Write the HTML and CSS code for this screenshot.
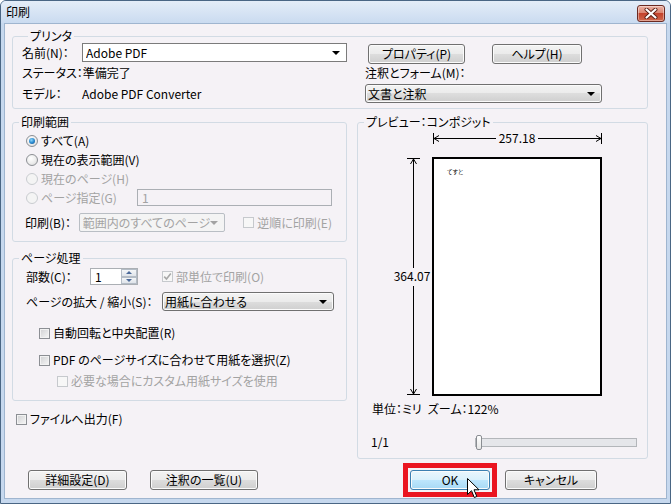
FILE: index.html
```html
<!DOCTYPE html>
<html lang="ja">
<head>
    <meta charset="UTF-8">
    <title>印刷</title>
    <link rel="stylesheet" href="styles.css">
</head>
<body>
<div class="window">
    <div class="titlebar">
        <span class="title">印刷</span>
        <button class="close-btn" title="閉じる">
            <svg width="14" height="11" viewBox="0 0 14 11">
                <path d="M2.5 1.5 L11.5 9.5 M11.5 1.5 L2.5 9.5" stroke="#5a1f14" stroke-width="4" stroke-linecap="round"/>
                <path d="M2.5 1.5 L11.5 9.5 M11.5 1.5 L2.5 9.5" stroke="#fff" stroke-width="2.2" stroke-linecap="round"/>
            </svg>
        </button>
    </div>

    <div class="frame">
        <div class="client">
            <!-- printer -->
            <fieldset class="group printer-group">
                <legend>プリンタ</legend>
                <div class="printer-grid">
                    <span>名前(N)：</span>
                    <div class="combo combo-white"><span>Adobe PDF</span><span class="arrow"></span></div>
                    <div class="printer-buttons right">
                        <button class="btn btn-prop">プロパティ(P)</button>
                        <button class="btn btn-help">ヘルプ(H)</button>
                    </div>

                    <span class="status">ステータス：準備完了</span>
                    <span class="right">注釈とフォーム(M)：</span>

                    <span>モデル：</span>
                    <span>Adobe PDF Converter</span>
                    <div class="right">
                        <div class="combo combo-btn annot-combo"><span>文書と注釈</span><span class="arrow"></span></div>
                    </div>
                </div>
            </fieldset>

            <div class="middle">
                <div class="left-col">
                    <!-- print range -->
                    <fieldset class="group range-group">
                        <legend>印刷範囲</legend>
                        <div class="group-body">
                            <label class="opt radio-row"><span class="radio checked"></span>すべて(A)</label>
                            <label class="opt radio-row"><span class="radio"></span>現在の表示範囲(V)</label>
                            <label class="opt radio-row disabled"><span class="radio"></span>現在のページ(H)</label>
                            <div class="opt radio-row disabled">
                                <span class="radio"></span>ページ指定(G)
                                <span class="field field-pages">1</span>
                            </div>
                            <div class="print-row">
                                <span class="print-label">印刷(B)：</span>
                                <div class="combo combo-disabled subset-combo"><span>範囲内のすべてのページ</span><span class="arrow"></span></div>
                                <label class="opt disabled reverse"><span class="check"></span>逆順に印刷(E)</label>
                            </div>
                        </div>
                    </fieldset>

                    <!-- page handling -->
                    <fieldset class="group pages-group">
                        <legend>ページ処理</legend>
                        <div class="group-body">
                            <div class="copies-row">
                                <span class="copies-label">部数(C)：</span>
                                <div class="spin">
                                    <span class="spin-value">1</span>
                                    <span class="spin-btns">
                                        <span class="spin-btn"><span class="tri-up"></span></span>
                                        <span class="spin-btn"><span class="tri-down"></span></span>
                                    </span>
                                </div>
                                <label class="opt disabled collate">
                                    <span class="check">
                                        <svg width="9" height="9" viewBox="0 0 9 9"><path d="M1.2 4.6 L3.5 7 L7.8 1.6" fill="none" stroke="#a8a8a8" stroke-width="1.6"/></svg>
                                    </span>部単位で印刷(O)
                                </label>
                            </div>
                            <div class="scale-row">
                                <span class="scale-label">ページの拡大 / 縮小(S)：</span>
                                <div class="combo combo-btn scale-combo"><span>用紙に合わせる</span><span class="arrow"></span></div>
                            </div>
                            <label class="opt check-row indent1 first"><span class="check"></span>自動回転と中央配置(R)</label>
                            <label class="opt check-row indent1 second"><span class="check"></span>PDF のページサイズに合わせて用紙を選択(Z)</label>
                            <label class="opt check-row indent2 disabled"><span class="check"></span>必要な場合にカスタム用紙サイズを使用</label>
                        </div>
                    </fieldset>

                    <label class="opt check-row file-out"><span class="check"></span>ファイルへ出力(F)</label>
                </div>

                <!-- preview -->
                <fieldset class="group preview-group">
                    <legend>プレビュー：コンポジット</legend>
                    <svg class="preview-drawing" width="289" height="273" viewBox="0 0 289 273">
                        <g stroke="#000" stroke-width="1" fill="none">
                            <path d="M75.5 5 V16 M75.5 10.5 H138 M180 10.5 H243.5 M243.5 5 V16 M76 10.5 L81 7.5 M76 10.5 L81 13.5 M243 10.5 L238 7.5 M243 10.5 L238 13.5"/>
                            <path d="M49 30.5 H62 M55.5 30.5 V140 M55.5 158 V266.5 M49 266.5 H62 M55.5 31 L52.5 36 M55.5 31 L58.5 36 M55.5 266 L52.5 261 M55.5 266 L58.5 261"/>
                        </g>
                        <rect x="75" y="30" width="168" height="237" fill="#fff" stroke="#000" stroke-width="2"/>
                        <text x="159" y="14.5" text-anchor="middle" class="dim">257.18</text>
                        <text x="54" y="153" text-anchor="middle" class="dim">364.07</text>
                        <text x="89" y="46" class="tiny">てすと</text>
                    </svg>
                    <div class="preview-info">単位：ミリ&ensp;ズーム：122%</div>
                    <div class="page-row">
                        <span>1/1</span>
                        <div class="slider"><span class="thumb"></span></div>
                    </div>
                </fieldset>
            </div>

            <div class="footer">
                <button class="btn btn-advanced">詳細設定(D)</button>
                <button class="btn btn-summary">注釈の一覧(U)</button>
                <span class="highlight"><button class="btn btn-ok">OK</button></span>
                <button class="btn btn-cancel">キャンセル</button>
            </div>
        </div>
    </div>

    <svg class="cursor" width="13" height="21" viewBox="0 0 13 21">
        <path d="M0.5 0.5 L0.5 16.5 L4.5 12.7 L7.3 19.5 L9.8 18.5 L7 11.8 L12 11.8 Z" fill="#fff" stroke="#000" stroke-width="1" stroke-linejoin="round"/>
    </svg>
</div>
</body>
</html>
```

FILE: styles.css
```css
/* General */
* {
    box-sizing: border-box;
}

body {
    margin: 0;
    font-family: "Noto Sans CJK JP", "Noto Sans", sans-serif;
    font-size: 12px;
    line-height: 16px;
    font-feature-settings: "palt";
    color: #000;
    background: #fff;
    white-space: nowrap;
}

button {
    font: inherit;
    font-feature-settings: "palt";
    color: #000;
    padding: 0;
}

/* Window frame */
.window {
    position: relative;
    width: 671px;
    height: 504px;
    border: 1px solid #4a6684;
    border-radius: 6px 6px 0 0;
    background: #c6d8ee;
    display: flex;
    flex-direction: column;
    overflow: hidden;
}

.titlebar {
    height: 22px;
    display: flex;
    align-items: center;
    justify-content: space-between;
    padding: 0 5px;
    background: linear-gradient(#e4edf8, #cadbf0);
}

.close-btn {
    width: 28px;
    height: 17px;
    margin-top: 2px;
    border: 1px solid #6b2a22;
    border-radius: 3px;
    background: linear-gradient(#eab2a4 0%, #dc8672 45%, #c4432c 50%, #d0684c 100%);
    box-shadow: inset 0 0 0 1px rgba(255, 255, 255, 0.4);
    display: flex;
    align-items: center;
    justify-content: center;
}

.frame {
    flex: 1;
    display: flex;
    padding: 0 3px 4px;
}

.client {
    flex: 1;
    border: 1px solid #9fb5cf;
    background: #f5f2f6;
    padding: 6px 0 0 7px;
}

/* Group boxes */
.group {
    margin: 0;
    padding: 0;
    min-width: 0;
    border: 1px solid #d2dbe4;
    border-radius: 3px;
}

.group legend {
    margin-left: 6px;
    padding: 0 2px;
    line-height: 12px;
}

/* Printer */
.printer-group {
    width: 636px;
    padding: 1px 0 5px 9px;
}

.printer-grid {
    display: grid;
    grid-template-columns: 60px 265px 1fr;
    grid-template-rows: 19px 22px 19px;
    align-items: center;
}

.printer-grid .right {
    padding-left: 18px;
}

.status {
    grid-column: 1 / span 2;
}

.printer-buttons {
    display: flex;
    align-self: start;
    margin-top: 1px;
}

.btn-prop {
    width: 97px;
    height: 19px;
    margin-left: 3px;
}

.btn-help {
    width: 90px;
    height: 19px;
    margin-left: 27px;
}

.annot-combo {
    width: 237px;
}

/* Controls */
.btn {
    height: 20px;
    border: 1px solid #707070;
    border-radius: 3px;
    background: linear-gradient(#f3f3f3 0%, #ebebeb 50%, #dddddd 50%, #cfcfcf 100%);
    box-shadow: inset 0 0 0 1px #fbfbfb;
    text-align: center;
    line-height: 16px;
}

.combo {
    display: flex;
    align-items: center;
    height: 19px;
    padding: 0 6px 0 3px;
}

.combo span:first-child {
    flex: 1;
    overflow: hidden;
}

.combo .arrow {
    width: 0;
    height: 0;
    border-left: 4px solid transparent;
    border-right: 4px solid transparent;
    border-top: 4px solid #000;
}

.combo-white {
    background: #fff;
    border: 1px solid #7b7b7b;
}

.combo-btn {
    border: 1px solid #707070;
    border-radius: 3px;
    background: linear-gradient(#f3f3f3 0%, #ebebeb 50%, #dddddd 50%, #cfcfcf 100%);
    box-shadow: inset 0 0 0 1px #fbfbfb;
    padding-left: 2px;
}

.combo-disabled {
    border: 1px solid #b9bec4;
    border-radius: 2px;
    background: #f4f4f4;
    color: #a3a3a3;
}

.combo-disabled .arrow {
    border-top-color: #a3a3a3;
}

.field {
    height: 17px;
    border: 1px solid #abafb4;
    padding-left: 4px;
    line-height: 15px;
}

.opt {
    display: flex;
    align-items: center;
    gap: 3px;
}

.disabled {
    color: #a3a3a3;
}

.radio {
    width: 12px;
    height: 12px;
    border-radius: 50%;
    border: 1px solid #8c8f94;
    background: radial-gradient(circle at 40% 35%, #ffffff 0%, #ececec 55%, #d2d2d2 100%);
    display: flex;
    align-items: center;
    justify-content: center;
}

.radio.checked::after {
    content: "";
    width: 6px;
    height: 6px;
    border-radius: 50%;
    background: radial-gradient(circle at 40% 35%, #8ed8fb 0%, #2b8ad0 50%, #114a86 100%);
}

.disabled .radio {
    border-color: #c9ccd0;
    background: #f4f4f4;
}

.check {
    width: 11px;
    height: 11px;
    border: 1px solid #8c8f94;
    background: linear-gradient(135deg, #cfd0d2, #f7f7f7);
    box-shadow: inset 0 0 0 1px #f2f2f2;
    display: flex;
    align-items: center;
    justify-content: center;
}

.disabled .check {
    border-color: #c6c9cd;
    background: #f7f7f7;
    box-shadow: none;
}

/* Middle area */
.middle {
    display: flex;
    align-items: flex-start;
    gap: 10px;
    margin-top: 7px;
}

.left-col {
    width: 335px;
}

.range-group .group-body {
    padding: 3px 14px 9px 13px;
}

.radio-row {
    height: 19px;
}

.field-pages {
    width: 195px;
    margin-left: auto;
}

.print-row {
    display: flex;
    align-items: center;
    height: 19px;
    margin: 6px 0 0 -1px;
}

.print-label {
    width: 56px;
}

.subset-combo {
    width: 147px;
}

.reverse {
    margin-left: 18px;
}

.pages-group {
    margin-top: 10px;
}

.pages-group .group-body {
    padding: 3px 0 11px 13px;
}

.copies-row {
    display: flex;
    align-items: center;
    height: 19px;
}

.copies-label {
    width: 64px;
}

.spin {
    width: 48px;
    height: 17px;
    border: 1px solid #abafb4;
    background: #fff;
    display: flex;
}

.spin-value {
    flex: 1;
    padding-left: 4px;
    line-height: 15px;
}

.spin-btns {
    width: 16px;
    display: flex;
    flex-direction: column;
}

.spin-btn {
    flex: 1;
    border: 1px solid #b4bcc6;
    background: linear-gradient(#f4f6f8, #dfe4ea);
    display: flex;
    align-items: center;
    justify-content: center;
}

.tri-up,
.tri-down {
    width: 0;
    height: 0;
    border-left: 3px solid transparent;
    border-right: 3px solid transparent;
}

.tri-up {
    border-bottom: 3px solid #4c6a9a;
}

.tri-down {
    border-top: 3px solid #4c6a9a;
}

.collate {
    margin-left: 24px;
}

.scale-row {
    display: flex;
    align-items: center;
    height: 19px;
    margin-top: 6px;
}

.scale-label {
    width: 136px;
}

.scale-combo {
    width: 172px;
}

.check-row {
    height: 16px;
}

.indent1 {
    margin-left: 13px;
}

.indent2 {
    margin-left: 31px;
    margin-top: 5px;
}

.check-row.first {
    margin-top: 14px;
}

.check-row.second {
    margin-top: 11px;
}

.file-out {
    margin: 10px 0 0 4px;
}

/* Preview */
.preview-group {
    width: 291px;
    padding: 0 10px 8px 0;
}

.preview-drawing {
    display: block;
}

.preview-drawing .dim {
    font-size: 12px;
}

.preview-drawing .tiny {
    font-size: 6px;
}

.preview-info {
    padding-left: 14px;
    line-height: 16px;
}

.page-row {
    display: flex;
    align-items: center;
    height: 16px;
    margin-top: 17px;
    padding-left: 13px;
}

.slider {
    position: relative;
    width: 162px;
    height: 9px;
    margin-left: auto;
    border: 1px solid #b3b6ba;
    background: #e5e6ea;
}

.slider .thumb {
    position: absolute;
    left: 0;
    top: -4px;
    width: 6px;
    height: 15px;
    border: 1px solid #8a8d92;
    border-radius: 2px;
    background: linear-gradient(#ffffff, #e6e6e6);
}

/* Footer */
.footer {
    display: flex;
    align-items: center;
    margin-top: 4px;
}

.btn-advanced {
    width: 99px;
    margin-left: 16px;
}

.btn-summary {
    width: 108px;
    margin-left: 23px;
}

/* red marker drawn around the OK button */
.highlight {
    display: flex;
    margin-left: 145px;
    padding: 2px;
    border: 5px solid #ea1520;
}

.btn-ok {
    width: 80px;
    border-color: #3c7fb1;
    background: linear-gradient(#eaf6fd 0%, #d9f0fc 50%, #bee6fd 50%, #a7d9f5 100%);
}

.btn-cancel {
    width: 92px;
    margin-left: 8px;
}

/* mouse pointer over the OK button */
.cursor {
    position: absolute;
    left: 466px;
    top: 477px;
}
```
